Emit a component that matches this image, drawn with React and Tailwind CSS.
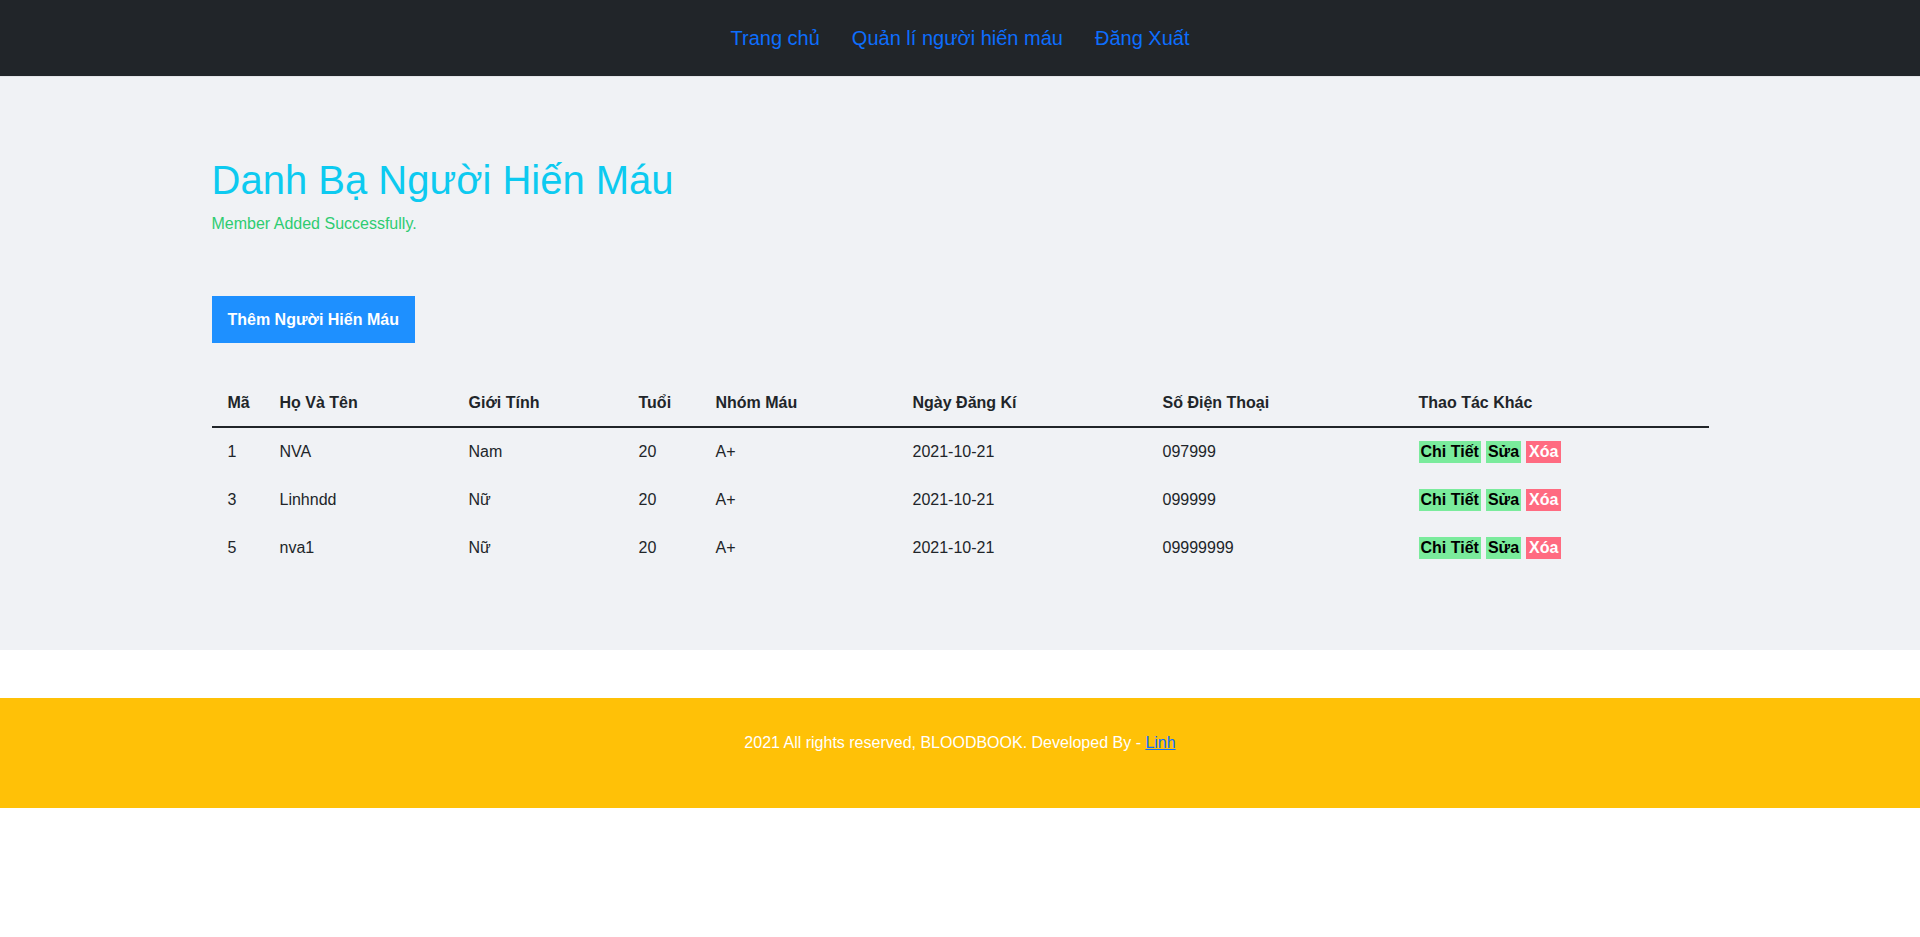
const donors = [
  { id: 1, name: 'NVA', gender: 'Nam', age: 20, blood: 'A+', date: '2021-10-21', phone: '097999' },
  { id: 3, name: 'Linhndd', gender: 'Nữ', age: 20, blood: 'A+', date: '2021-10-21', phone: '099999' },
  { id: 5, name: 'nva1', gender: 'Nữ', age: 20, blood: 'A+', date: '2021-10-21', phone: '09999999' },
];

const headers = ['Mã', 'Họ Và Tên', 'Giới Tính', 'Tuổi', 'Nhóm Máu', 'Ngày Đăng Kí', 'Số Điện Thoại', 'Thao Tác Khác'];

const gridCols = 'grid grid-cols-[52px_189px_170px_77px_197px_250px_256px_1fr]';

const App = () => {
  return (
    <div className="min-h-screen bg-white font-['Liberation_Sans',Arial,sans-serif] text-[#212529]">
      {/* Navbar */}
      <nav className="h-[77px] bg-[#212529] flex items-center justify-center border-b border-[#e3e5e9]">
        <a href="#" className="px-4 text-[20px] text-[#0d6efd]">Trang chủ</a>
        <a href="#" className="px-4 text-[20px] text-[#0d6efd]">Quản lí người hiến máu</a>
        <a href="#" className="px-4 text-[20px] text-[#0d6efd]">Đăng Xuất</a>
      </nav>

      {/* Main */}
      <section className="bg-[#f0f2f5] pt-[79px] pb-[78px]">
        <div className="w-[1497px] mx-auto">
          <h1 className="text-[40px] leading-[48px] text-[#0dcaf0] mb-2">Danh Bạ Người Hiến Máu</h1>
          <p className="text-base leading-6 text-[#2ecc71]">Member Added Successfully.</p>

          <button className="mt-[60px] h-[47px] px-[16px] bg-[#1e90ff] text-white font-bold text-base">
            Thêm Người Hiến Máu
          </button>

          {/* Table */}
          <div className="mt-[37px]">
            <div className={`${gridCols} h-[48px] items-center font-bold border-b-2 border-[#212529]`}>
              {headers.map((h) => (
                <div key={h} className="pl-4">{h}</div>
              ))}
            </div>
            {donors.map((d) => (
              <div key={d.id} className={`${gridCols} h-[48px] items-center`}>
                <div className="pl-4">{d.id}</div>
                <div className="pl-4">{d.name}</div>
                <div className="pl-4">{d.gender}</div>
                <div className="pl-4">{d.age}</div>
                <div className="pl-4">{d.blood}</div>
                <div className="pl-4">{d.date}</div>
                <div className="pl-4">{d.phone}</div>
                <div className="pl-4 flex gap-[5px] font-bold">
                  <a href="#" className="h-[22px] leading-[22px] px-[2px] bg-[#7aeb9c] text-black">Chi Tiết</a>
                  <a href="#" className="h-[22px] leading-[22px] px-[2px] bg-[#7aeb9c] text-black">Sửa</a>
                  <a href="#" className="h-[22px] leading-[22px] px-[3px] bg-[#ff6b81] text-white">Xóa</a>
                </div>
              </div>
            ))}
          </div>
        </div>
      </section>

      {/* Footer */}
      <footer className="mt-[48px] h-[110px] bg-[#ffc107] pt-[33px] text-center text-white text-base leading-6">
        2021 All rights reserved, BLOODBOOK. Developed By - <a href="#" className="text-[#0d6efd] underline">Linh</a>
      </footer>
    </div>
  );
};

export default App;
